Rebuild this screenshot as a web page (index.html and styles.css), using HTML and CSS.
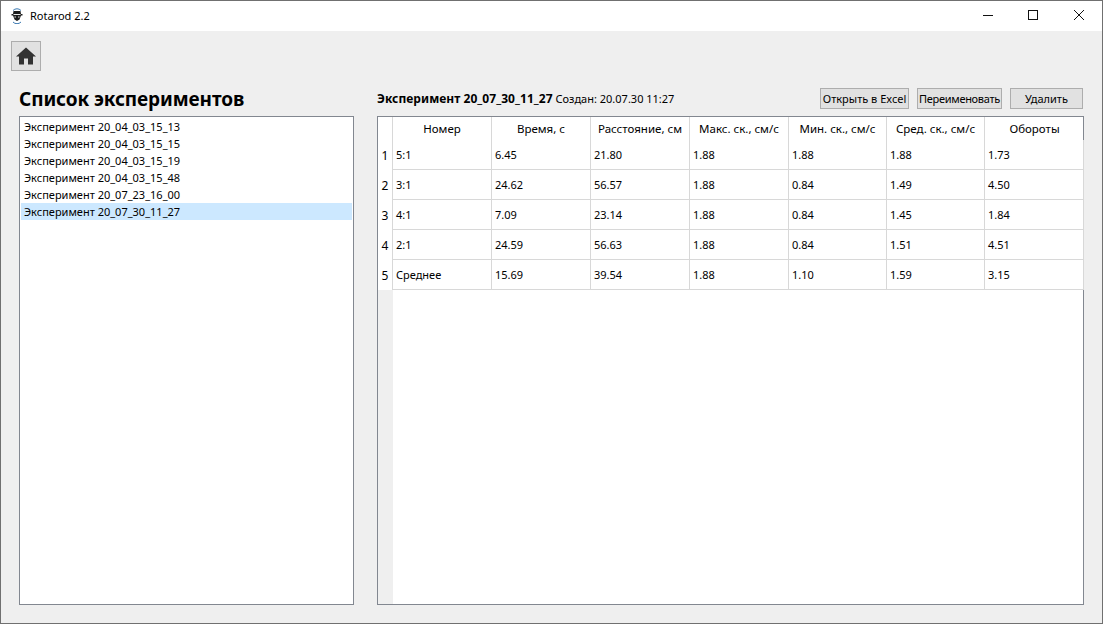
FILE: index.html
```html
<!DOCTYPE html>
<html lang="en">
<head>
    <meta charset="UTF-8">
    <meta name="viewport" content="width=device-width, initial-scale=1.0">
    <title>Rotarod 2.2</title>
    <link rel="stylesheet" href="styles.css">
</head>
<body>
    <div class="window">
        <div class="titlebar">
            <svg class="app-icon" width="16" height="16" viewBox="0 0 16 16">
                <path d="M4 2.5 A5.5 5.5 0 0 1 12 2.5" fill="none" stroke="#3a78b0" stroke-width="1"/>
                <path d="M4 14 A5.5 5.5 0 0 0 12 14" fill="none" stroke="#3a78b0" stroke-width="1"/>
                <path d="M4.5 3 H11.5 L12 6 H13.5 V7.5 H12 L10.5 11.5 L8 13 L5.5 11.5 L4 7.5 H2.5 V6 H4 Z" fill="#1c1c1c"/>
                <rect x="4.5" y="6" width="7" height="1" fill="#e8e8e8"/>
                <rect x="5.5" y="8.5" width="1.5" height="1" fill="#ddd"/>
                <rect x="9" y="8.5" width="1.5" height="1" fill="#ddd"/>
            </svg>
            <span class="app-title">Rotarod 2.2</span>
            <div class="win-controls">
                <svg class="win-btn" width="46" height="30" viewBox="0 0 46 30"><path d="M19 14.5 H29" stroke="#111" fill="none"/></svg>
                <svg class="win-btn" width="46" height="30" viewBox="0 0 46 30"><rect x="18.5" y="9.5" width="9" height="9" stroke="#111" fill="none"/></svg>
                <svg class="win-btn" width="46" height="30" viewBox="0 0 46 30"><path d="M18 9 L28 19 M28 9 L18 19" stroke="#111" fill="none"/></svg>
            </div>
        </div>

        <div class="content">
            <div class="toolbar">
                <button class="home-btn">
                    <svg width="20" height="18" viewBox="0 0 20 18">
                        <path d="M10 0.5 L20 9.5 H17 V17.5 H12 V11.5 H8 V17.5 H3 V9.5 H0 Z" fill="#333"/>
                    </svg>
                </button>
            </div>

            <div class="columns">
                <div class="left">
                    <h1 class="list-title">Список экспериментов</h1>
                    <div class="exp-list">
                        <div class="exp-item">Эксперимент 20_04_03_15_13</div>
                        <div class="exp-item">Эксперимент 20_04_03_15_15</div>
                        <div class="exp-item">Эксперимент 20_04_03_15_19</div>
                        <div class="exp-item">Эксперимент 20_04_03_15_48</div>
                        <div class="exp-item">Эксперимент 20_07_23_16_00</div>
                        <div class="exp-item selected">Эксперимент 20_07_30_11_27</div>
                    </div>
                </div>

                <div class="right">
                    <div class="exp-header">
                        <div class="exp-info"><b>Эксперимент 20_07_30_11_27</b> <span class="exp-date">Создан: 20.07.30 11:27</span></div>
                        <div class="actions">
                            <button class="btn btn-excel">Открыть в Excel</button>
                            <button class="btn btn-rename">Переименовать</button>
                            <button class="btn btn-delete">Удалить</button>
                        </div>
                    </div>
                    <div class="table-box">
                        <table class="results">
                            <thead>
                                <tr>
                                    <th class="corner"></th>
                                    <th>Номер</th>
                                    <th>Время, с</th>
                                    <th>Расстояние, см</th>
                                    <th>Макс. ск., см/с</th>
                                    <th class="narrow">Мин. ск., см/с</th>
                                    <th class="narrow">Сред. ск., см/с</th>
                                    <th>Обороты</th>
                                </tr>
                            </thead>
                            <tbody>
                                <tr><td class="row-num">1</td><td>5:1</td><td>6.45</td><td>21.80</td><td>1.88</td><td>1.88</td><td>1.88</td><td>1.73</td></tr>
                                <tr><td class="row-num">2</td><td>3:1</td><td>24.62</td><td>56.57</td><td>1.88</td><td>0.84</td><td>1.49</td><td>4.50</td></tr>
                                <tr><td class="row-num">3</td><td>4:1</td><td>7.09</td><td>23.14</td><td>1.88</td><td>0.84</td><td>1.45</td><td>1.84</td></tr>
                                <tr><td class="row-num">4</td><td>2:1</td><td>24.59</td><td>56.63</td><td>1.88</td><td>0.84</td><td>1.51</td><td>4.51</td></tr>
                                <tr><td class="row-num">5</td><td>Среднее</td><td>15.69</td><td>39.54</td><td>1.88</td><td>1.10</td><td>1.59</td><td>3.15</td></tr>
                            </tbody>
                        </table>
                        <div class="table-rest">
                            <div class="row-gutter"></div>
                        </div>
                    </div>
                </div>
            </div>
        </div>
    </div>
</body>
</html>
```

FILE: styles.css
```css
* {
    margin: 0;
    padding: 0;
    box-sizing: border-box;
}

html, body {
    width: 1103px;
    height: 624px;
    overflow: hidden;
}

body {
    font-family: "Noto Sans", "Open Sans", sans-serif;
    font-size: 11px;
    color: #000;
}

.window {
    width: 1103px;
    height: 624px;
    border: 1px solid #707070;
    background: #efefef;
    display: flex;
    flex-direction: column;
}

.titlebar {
    height: 30px;
    background: #fff;
    display: flex;
    align-items: center;
    padding-left: 8px;
    flex-shrink: 0;
}

.app-icon {
    margin-right: 5px;
}

.app-title {
    font-size: 11px;
    margin-bottom: 2px;
}

.win-controls {
    margin-left: auto;
    display: flex;
}

.content {
    flex: 1;
    display: flex;
    flex-direction: column;
    padding: 10px 18px 18px 10px;
    min-height: 0;
}

.toolbar {
    height: 30px;
    flex-shrink: 0;
}

.home-btn {
    width: 30px;
    height: 30px;
    background: #e1e1e1;
    border: 1px solid #adadad;
    display: flex;
    align-items: center;
    justify-content: center;
}

.columns {
    flex: 1;
    display: flex;
    gap: 23px;
    min-height: 0;
    padding-left: 8px;
}

.left {
    width: 335px;
    display: flex;
    flex-direction: column;
}

.list-title {
    height: 45px;
    padding-top: 16px;
    font-size: 19px;
    font-weight: 700;
    line-height: 24px;
    letter-spacing: -0.1px;
}

.exp-list {
    flex: 1;
    background: #fff;
    border: 1px solid #828790;
    padding: 1px;
}

.exp-item {
    height: 17px;
    line-height: 17px;
    padding-left: 3px;
}

.exp-item.selected {
    background: #cce8ff;
}

.right {
    width: 707px;
    display: flex;
    flex-direction: column;
}

.exp-header {
    height: 45px;
    display: flex;
    justify-content: space-between;
    align-items: flex-start;
    padding-top: 17px;
}

.exp-info {
    line-height: 22px;
}

.exp-info b {
    font-size: 12px;
    letter-spacing: 0.05px;
}

.actions {
    display: flex;
    gap: 8px;
    margin-right: 1px;
}

.btn {
    height: 21px;
    font-family: inherit;
    font-size: 11px;
    background: #e1e1e1;
    border: 1px solid #adadad;
    color: #000;
    white-space: nowrap;
}

.btn-excel { width: 89px; }
.btn-rename { width: 85px; letter-spacing: -0.3px; }
.btn-delete { width: 73px; }

.table-box {
    flex: 1;
    background: #fff;
    border: 1px solid #828790;
    display: flex;
    flex-direction: column;
    min-height: 0;
}

.results {
    border-collapse: separate;
    border-spacing: 0;
    table-layout: fixed;
    width: 705px;
}

.results th {
    height: 23px;
    width: 99px;
    font-size: 11.5px;
    font-weight: 400;
    text-align: center;
    border-right: 1px solid #d8d8d8;
}

.results th:last-child {
    border-right: none;
}

.results th.corner {
    width: 15px;
}

.results th.narrow {
    width: 98px;
}

.results td {
    height: 30px;
    padding-left: 3px;
    border-right: 1px solid #d8d8d8;
    border-bottom: 1px solid #d8d8d8;
}

.results td.row-num {
    padding-left: 0;
    font-size: 12px;
    text-align: center;
    border-bottom: none;
}

.table-rest {
    flex: 1;
    min-height: 0;
}

.row-gutter {
    width: 15px;
    height: 100%;
    background: #efefef;
}
```
